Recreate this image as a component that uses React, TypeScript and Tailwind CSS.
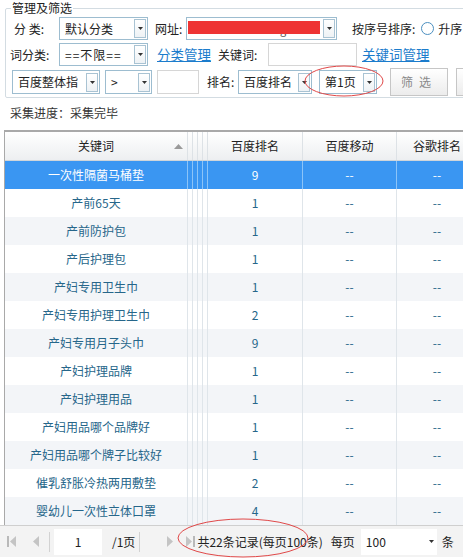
const FONT = { fontFamily: '"Microsoft YaHei", "Noto Sans CJK SC", "Noto Sans", sans-serif' };

const rows: { kw: string; bd: string }[] = [
  { kw: '一次性隔菌马桶垫', bd: '9' },
  { kw: '产前65天', bd: '1' },
  { kw: '产前防护包', bd: '1' },
  { kw: '产后护理包', bd: '1' },
  { kw: '产妇专用卫生巾', bd: '1' },
  { kw: '产妇专用护理卫生巾', bd: '2' },
  { kw: '产妇专用月子头巾', bd: '9' },
  { kw: '产妇护理品牌', bd: '1' },
  { kw: '产妇护理用品', bd: '1' },
  { kw: '产妇用品哪个品牌好', bd: '1' },
  { kw: '产妇用品哪个牌子比较好', bd: '1' },
  { kw: '催乳舒胀冷热两用敷垫', bd: '2' },
  { kw: '婴幼儿一次性立体口罩', bd: '4' },
];

const Arrow = () => (
  <svg width="5" height="3" viewBox="0 0 5 3">
    <path d="M0 0H5L2.5 3Z" fill="#333" />
  </svg>
);

const DropBtn = () => (
  <span className="flex h-[19px] w-[12px] items-center justify-center border border-[#a9c3d3] bg-gradient-to-b from-white to-[#eef2f5]">
    <Arrow />
  </span>
);

const Select: React.FC<{ text: string; className?: string }> = ({ text, className = '' }) => (
  <div className={`flex h-[23px] items-center justify-between border border-[#9dbdd0] bg-white pl-[5px] pr-[1px] ${className}`}>
    <span className="whitespace-nowrap text-[12px] text-[#222]">{text}</span>
    <DropBtn />
  </div>
);

const Input: React.FC<{ className?: string }> = ({ className = '' }) => (
  <div className={`h-[23px] border border-[#d6d6d6] bg-white ${className}`} />
);

const cols = 'grid grid-cols-[183px_5px_5px_5px_5px_95px_94px_80px]';

export default function App() {
  return (
    <div className="relative h-[558px] w-[463px] overflow-hidden bg-white text-[12px] text-[#222]" style={FONT}>
      {/* 管理及筛选 */}
      <fieldset className="ml-[5px] h-[98px] w-[480px] rounded-[2px] border border-[#d3dce2] pt-[1px]">
        <legend className="ml-[5px] px-[1px] leading-[16px] text-[#222]">管理及筛选</legend>

        <div className="flex h-[23px] items-center">
          <span className="w-[53px] pl-[8px]">分 类:</span>
          <Select text="默认分类" className="w-[89px]" />
          <span className="ml-[7px] w-[31px]">网址:</span>
          <div className="flex h-[23px] w-[151px] items-center justify-between border border-[#9dbdd0] bg-white pl-[1px] pr-[1px]">
            <div className="relative h-[19px] w-[132px]">
              <span className="absolute left-[92px] top-[2px] text-[11px] leading-[16px] text-[#555]">g</span>
              <div className="absolute left-0 top-[2px] h-[13px] w-[132px] bg-[#ee3434]" />
            </div>
            <DropBtn />
          </div>
          <span className="ml-[15px] whitespace-nowrap">按序号排序:</span>
          <span className="ml-[6px] h-[13px] w-[13px] rounded-full border border-[#4b8fc0] bg-white" />
          <span className="ml-[4px] whitespace-nowrap">升序</span>
        </div>

        <div className="mt-[3px] flex h-[23px] items-center">
          <span className="w-[53px] pl-[4px]">词分类:</span>
          <Select text="==不限==" className="w-[89px] tracking-[1px]" />
          <span className="ml-[9px] whitespace-nowrap text-[13.5px] text-[#1b7ccc] underline">分类管理</span>
          <span className="ml-[7px] w-[44px] whitespace-nowrap">关键词:</span>
          <Input className="ml-[6px] w-[89px]" />
          <span className="ml-[5px] whitespace-nowrap text-[13.5px] text-[#1b7ccc] underline">关键词管理</span>
        </div>

        <div className="mt-[3px] flex h-[26px] items-center">
          <Select text="百度整体指" className="ml-[6px] h-[24px] w-[88px]" />
          <Select text=">" className="ml-[5px] h-[24px] w-[47px]" />
          <Input className="ml-[5px] h-[24px] w-[42px]" />
          <span className="ml-[8px] w-[31px] whitespace-nowrap">排名:</span>
          <Select text="百度排名" className="h-[24px] w-[74px]" />
          <Select text="第1页" className="ml-[7px] h-[24px] w-[58px]" />
          <div className="ml-[13px] flex h-[28px] w-[58px] items-center justify-center border border-[#c6c6c6] bg-gradient-to-b from-white to-[#ececec] tracking-[6px] text-[#8a8a8a]">
            筛选
          </div>
          <div className="ml-[8px] h-[28px] w-[58px] border border-[#c6c6c6] bg-gradient-to-b from-white to-[#ececec]" />
        </div>
      </fieldset>

      <div className="ml-[10px] mt-[7px] h-[16px] leading-[16px] text-[#333]">采集进度：采集完毕</div>

      {/* Table */}
      <div className="ml-[4px] mt-[9px] w-[472px] border-l border-t-2 border-[#a9a9a9]">
        <div className={`${cols} h-[29px] border-b border-[#cfd5da] bg-gradient-to-b from-white to-[#edeff1] text-[#222]`}>
          <div className="relative flex items-center justify-center border-r border-[#dde2e6]">
            关键词
            <svg className="absolute right-[4px] top-[12px]" width="9" height="5" viewBox="0 0 9 5">
              <path d="M0 5L4.5 0L9 5Z" fill="#9a9a9a" />
            </svg>
          </div>
          <div className="border-r border-[#dde2e6]" />
          <div className="border-r border-[#dde2e6]" />
          <div className="border-r border-[#dde2e6]" />
          <div className="border-r border-[#dde2e6]" />
          <div className="flex items-center justify-center border-r border-[#dde2e6]">百度排名</div>
          <div className="flex items-center justify-center border-r border-[#dde2e6]">百度移动</div>
          <div className="flex items-center justify-center whitespace-nowrap">谷歌排名</div>
        </div>

        {rows.map((r, i) => {
          const sel = i === 0;
          const bg = sel ? 'bg-[#3a96f2] text-white' : i % 2 === 0 ? 'bg-[#f3f5f8] text-[#26668a]' : 'bg-white text-[#26668a]';
          const line = sel ? 'border-[#8cc4f8]' : 'border-[#dfe5ea]';
          return (
            <div key={i} className={`${cols} h-[28px] ${bg}`}>
              <div className={`flex items-center justify-center whitespace-nowrap border-r ${line}`}>{r.kw}</div>
              <div className={`border-r ${line}`} />
              <div className={`border-r ${line}`} />
              <div className={`border-r ${line}`} />
              <div className={`border-r ${line}`} />
              <div className={`flex items-center justify-center border-r ${line}`}>{r.bd}</div>
              <div className={`flex items-center justify-center border-r ${line}`}>--</div>
              <div className="flex items-center justify-center">--</div>
            </div>
          );
        })}
      </div>

      {/* Pagination */}
      <div className="flex h-[32px] items-center border-t border-[#cfcfcf] bg-[#f3f3f3] text-[#222]">
        <svg className="ml-[7px]" width="9" height="11" viewBox="0 0 9 11">
          <rect x="0" y="0" width="2" height="11" fill="#b9b9b9" />
          <path d="M9 0V11L3 5.5Z" fill="#c4c4c4" />
        </svg>
        <svg className="ml-[17px]" width="6" height="11" viewBox="0 0 6 11">
          <path d="M6 0V11L0 5.5Z" fill="#c4c4c4" />
        </svg>
        <span className="ml-[10px] h-[20px] w-px bg-[#d2d2d2]" />
        <div className="ml-[4px] flex h-[26px] w-[48px] items-center justify-center bg-white">1</div>
        <span className="ml-[10px] whitespace-nowrap">/1页</span>
        <span className="ml-[4px] h-[20px] w-px bg-[#d2d2d2]" />
        <svg className="ml-[27px]" width="6" height="11" viewBox="0 0 6 11">
          <path d="M0 0V11L6 5.5Z" fill="#c4c4c4" />
        </svg>
        <svg className="ml-[13px]" width="9" height="11" viewBox="0 0 9 11">
          <path d="M0 0V11L6 5.5Z" fill="#c4c4c4" />
          <rect x="7" y="0" width="2" height="11" fill="#b9b9b9" />
        </svg>
        <span className="ml-[2px] whitespace-nowrap">共22条记录(每页100条)</span>
        <span className="ml-[8px] whitespace-nowrap">每页</span>
        <div className="ml-[6px] flex h-[26px] w-[76px] items-center justify-between bg-white pl-[5px] pr-[3px]">
          <span>100</span>
          <svg width="5" height="3" viewBox="0 0 5 3">
            <path d="M0 0H5L2.5 3Z" fill="#333" />
          </svg>
        </div>
        <span className="ml-[5px]">条</span>
      </div>

      {/* Red annotation circles */}
      <svg className="pointer-events-none absolute left-0 top-0" width="463" height="558" viewBox="0 0 463 558">
        <ellipse cx="344" cy="81" rx="39" ry="15" fill="none" stroke="#e04848" strokeWidth="1" />
        <ellipse cx="243" cy="538" rx="65" ry="19" fill="none" stroke="#e04848" strokeWidth="1" />
      </svg>
    </div>
  );
}
